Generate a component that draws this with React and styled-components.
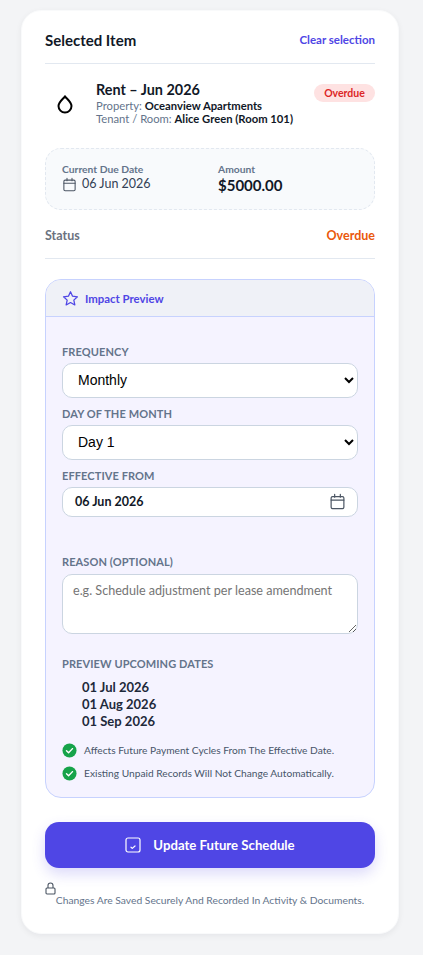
import React from 'react';
import styled, { createGlobalStyle } from 'styled-components';

const Global = createGlobalStyle`
  html, body { margin: 0; padding: 0; background: #f3f4f6; }
  body { font-family: "Lato", "Open Sans", sans-serif; color: #111827; }
  * { box-sizing: border-box; }
`;

const Page = styled.div`
  width: 423px;
  min-height: 955px;
  padding: 10px 24px 21px 21px;
`;

const Card = styled.div`
  background: #fff;
  border: 1px solid #f9fafb;
  border-radius: 20px;
  padding: 19px 23px 26px;
  box-shadow: 0 2px 6px rgba(17, 24, 39, 0.06);
`;

const Header = styled.div`
  display: flex;
  justify-content: space-between;
  align-items: center;
  height: 19px;
  padding-bottom: 0;
`;

const Title = styled.div`
  font-size: 15px;
  font-weight: 700;
  color: #111827;
`;

const ClearLink = styled.a`
  font-size: 11.5px;
  font-weight: 700;
  color: #4f46e5;
`;

const Divider = styled.div`
  height: 1px;
  background: #e2e8f0;
  margin-top: ${p => p.$top}px;
`;

const ItemRow = styled.div`
  display: flex;
  align-items: flex-start;
  margin-top: 17px;
  height: 48px;
`;

const ItemIcon = styled.div`
  width: 51px;
  height: 48px;
  flex-shrink: 0;
  padding: 13px 0 0 10px;
`;

const ItemText = styled.div`
  flex: 1;
`;

const ItemTitle = styled.div`
  font-size: 14.4px;
  font-weight: 700;
  line-height: 18px;
  color: #111827;
`;

const ItemLine = styled.div`
  font-size: 11.25px;
  line-height: 13px;
  color: #64748b;
  b { color: #111827; font-weight: 700; }
`;

const Badge = styled.span`
  background: #fee2e2;
  color: #dc2626;
  font-size: 10.5px;
  font-weight: 700;
  height: 18px;
  width: 61px;
  margin-top: 3px;
  display: flex;
  align-items: center;
  justify-content: center;
  border-radius: 9px;
`;

const DueBox = styled.div`
  display: flex;
  margin-top: 19px;
  height: 62px;
  padding: 13px 16px;
  background: #f8fafc;
  border: 1px dashed #e2e8f0;
  border-radius: 16px;
`;

const DueCol = styled.div`
  width: ${p => p.$width}px;
`;

const SmallLabel = styled.div`
  font-size: 10.3px;
  font-weight: 700;
  line-height: 14px;
  color: #64748b;
`;

const DueDate = styled.div`
  display: flex;
  align-items: center;
  gap: 5px;
  font-size: 12.5px;
  line-height: 16px;
  color: #334155;
`;

const Amount = styled.div`
  font-size: 15px;
  font-weight: 700;
  line-height: 18px;
  color: #111827;
`;

const StatusRow = styled.div`
  display: flex;
  justify-content: space-between;
  align-items: center;
  margin-top: 17px;
  height: 16px;
`;

const StatusLabel = styled.span`
  font-size: 12.5px;
  font-weight: 700;
  color: #6b7280;
`;

const StatusValue = styled.span`
  font-size: 12.5px;
  font-weight: 700;
  color: #ea580c;
`;

const Panel = styled.div`
  margin-top: 20px;
  background: #f5f3ff;
  border: 1px solid #c7d2fe;
  border-radius: 16px;
  overflow: hidden;
`;

const PanelHeader = styled.div`
  display: flex;
  align-items: center;
  gap: 6px;
  height: 37px;
  padding-left: 16px;
  background: #eff1f7;
  border-bottom: 1px solid #c7d2fe;
  font-size: 11.4px;
  font-weight: 700;
  color: #4f46e5;
`;

const PanelBody = styled.div`
  padding: 28px 16px 16px;
`;

const FieldLabel = styled.label`
  display: block;
  font-size: 11px;
  font-weight: 700;
  line-height: 13px;
  letter-spacing: 0.1px;
  color: #64748b;
  margin-top: ${p => p.$top || 0}px;
  margin-bottom: ${p => p.$bottom || 5}px;
`;

const Select = styled.select`
  display: block;
  width: 296px;
  height: 35px;
  margin-bottom: 9px;
  padding: 0 11px 1px;
  font-family: "Liberation Sans", Arial, sans-serif;
  font-size: 14px;
  color: #000;
  background: #fff;
  border: 1px solid #cbd5e1;
  border-radius: 10px;
`;

const DateField = styled.div`
  display: flex;
  align-items: center;
  justify-content: space-between;
  width: 296px;
  height: 30px;
  padding: 0 11px 2px 12px;
  font-size: 12.5px;
  font-weight: 700;
  color: #111827;
  background: #fff;
  border: 1px solid #cbd5e1;
  border-radius: 10px;
`;

const TextArea = styled.textarea`
  display: block;
  width: 296px;
  height: 60px;
  padding: 8px 10px;
  font-family: "Lato", sans-serif;
  font-size: 12.6px;
  background: #fff;
  border: 1px solid #cbd5e1;
  border-radius: 10px;
  &::placeholder { color: #757575; }
`;

const DateList = styled.div`
  padding-left: 20px;
  margin-top: 9px;
`;

const DateItem = styled.div`
  font-size: 13px;
  font-weight: 700;
  line-height: 17px;
  color: #1e293b;
`;

const Notes = styled.div`
  margin-top: 12px;
  display: flex;
  flex-direction: column;
  gap: 7px;
`;

const Note = styled.div`
  display: flex;
  align-items: center;
  gap: 7px;
  height: 16px;
  font-size: 10.2px;
  color: #475569;
`;

const SubmitButton = styled.button`
  display: flex;
  align-items: center;
  justify-content: center;
  gap: 12px;
  width: 100%;
  height: 46px;
  margin-top: 24px;
  color: #fff;
  background: #4f46e5;
  border: 0;
  border-radius: 14px;
  font-family: "Lato", sans-serif;
  font-size: 13.2px;
  font-weight: 700;
  box-shadow: 0 6px 14px rgba(79, 70, 229, 0.2);
`;

const Footer = styled.div`
  margin-top: 14px;
  font-size: 10.3px;
  color: #64748b;
`;

const LockWrap = styled.div`
  height: 12px;
  line-height: 0;
`;

const FooterText = styled.div`
  text-align: center;
  line-height: 13px;
`;

const Cal = ({ size = 15, color = '#4b5563' }) => (
  <svg width={size} height={size} viewBox="0 0 24 24" fill="none" stroke={color} strokeWidth="1.7" strokeLinecap="round" strokeLinejoin="round">
    <rect x="3" y="5" width="18" height="17" rx="2" />
    <path d="M8 2v4M16 2v4M3 10h18" />
  </svg>
);

const Check = () => (
  <svg width="15" height="15" viewBox="0 0 16 16">
    <circle cx="8" cy="8" r="7.5" fill="#16a34a" />
    <path d="M4.8 8.3l2.2 2.1 4.2-4.4" fill="none" stroke="#fff" strokeWidth="1.5" strokeLinecap="round" strokeLinejoin="round" />
  </svg>
);

export default function App() {
  return (
    <Page>
      <Global />
      <Card>
        <Header>
          <Title>Selected Item</Title>
          <ClearLink>Clear selection</ClearLink>
        </Header>
        <Divider $top={14} />

        <ItemRow>
          <ItemIcon>
            <svg width="20" height="20" viewBox="0 0 20 20" fill="none" stroke="#000" strokeWidth="2">
              <path d="M10 2.5C12.5 5.5 16.5 8.2 16.5 12a6.5 6.5 0 0 1-13 0C3.500 8.200 7.500 5.500 10 2.500z" />
            </svg>
          </ItemIcon>
          <ItemText>
            <ItemTitle>Rent – Jun 2026</ItemTitle>
            <ItemLine>Property: <b>Oceanview Apartments</b></ItemLine>
            <ItemLine>Tenant / Room: <b>Alice Green (Room 101)</b></ItemLine>
          </ItemText>
          <Badge>Overdue</Badge>
        </ItemRow>

        <DueBox>
          <DueCol $width={156}>
            <SmallLabel>Current Due Date</SmallLabel>
            <DueDate><Cal />06 Jun 2026</DueDate>
          </DueCol>
          <DueCol $width={120}>
            <SmallLabel>Amount</SmallLabel>
            <Amount>$5000.00</Amount>
          </DueCol>
        </DueBox>

        <StatusRow>
          <StatusLabel>Status</StatusLabel>
          <StatusValue>Overdue</StatusValue>
        </StatusRow>
        <Divider $top={15} />

        <Panel>
          <PanelHeader>
            <svg width="17" height="17" viewBox="0 0 24 24" fill="none" stroke="#4f46e5" strokeWidth="1.8" strokeLinejoin="round">
              <path d="M12 2.500l2.900 6.300 6.900.8-5.100 4.700 1.400 6.800L12 17.700l-6.100 3.400 1.400-6.800L2.200 9.600l6.900-.8z" />
            </svg>
            Impact Preview
          </PanelHeader>
          <PanelBody>
            <FieldLabel>FREQUENCY</FieldLabel>
            <Select defaultValue="Monthly"><option>Monthly</option></Select>
            <FieldLabel>DAY OF THE MONTH</FieldLabel>
            <Select defaultValue="Day 1"><option>Day 1</option></Select>
            <FieldLabel>EFFECTIVE FROM</FieldLabel>
            <DateField>06 Jun 2026<Cal size={17} /></DateField>

            <FieldLabel $top={38} $bottom={6}>REASON (OPTIONAL)</FieldLabel>
            <TextArea placeholder="e.g. Schedule adjustment per lease amendment" />

            <FieldLabel $top={23}>PREVIEW UPCOMING DATES</FieldLabel>
            <DateList>
              <DateItem>01 Jul 2026</DateItem>
              <DateItem>01 Aug 2026</DateItem>
              <DateItem>01 Sep 2026</DateItem>
            </DateList>

            <Notes>
              <Note><Check />Affects Future Payment Cycles From The Effective Date.</Note>
              <Note><Check />Existing Unpaid Records Will Not Change Automatically.</Note>
            </Notes>
          </PanelBody>
        </Panel>

        <SubmitButton>
          <svg width="16" height="16" viewBox="0 0 16 16" fill="none" stroke="#fff" strokeLinecap="round" strokeLinejoin="round">
            <rect x="1" y="1" width="14" height="14" rx="2" strokeWidth="1.2" />
            <path d="M6 10.200l1.300 1.200L10 9" strokeWidth="1.200" />
          </svg>
          Update Future Schedule
        </SubmitButton>

        <Footer>
          <LockWrap>
            <svg width="11" height="13" viewBox="0 0 11 13" fill="none" stroke="#4b5563" strokeWidth="1.1">
              <rect x="1" y="6" width="9" height="6" rx="1" />
              <path d="M3 6V3.500a2.500 2.500 0 0 1 5 0V6" />
            </svg>
          </LockWrap>
          <FooterText>Changes Are Saved Securely And Recorded In Activity &amp; Documents.</FooterText>
        </Footer>
      </Card>
    </Page>
  );
}
